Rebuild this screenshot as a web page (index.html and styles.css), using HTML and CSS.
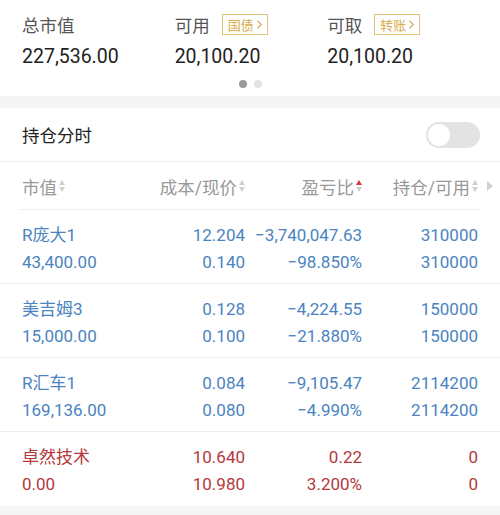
FILE: index.html
```html
<!DOCTYPE html>
<html lang="zh-CN">
<head>
  <meta charset="UTF-8" />
  <meta name="viewport" content="width=device-width, initial-scale=1.0"/>
  <title>持仓</title>
  <link rel="stylesheet" href="styles.css">
</head>
<body>

  <section class="summary">
    <div class="summary-grid">
      <div class="summary-item">
        <div class="label">总市值</div>
        <div class="value">227,536.00</div>
      </div>
      <div class="summary-item">
        <div class="label">可用 <span class="tag">国债<svg viewBox="0 0 8 12" width="7" height="11"><polyline points="1.5,1.5 6,6 1.5,10.5" /></svg></span></div>
        <div class="value">20,100.20</div>
      </div>
      <div class="summary-item">
        <div class="label">可取 <span class="tag">转账<svg viewBox="0 0 8 12" width="7" height="11"><polyline points="1.5,1.5 6,6 1.5,10.5" /></svg></span></div>
        <div class="value">20,100.20</div>
      </div>
    </div>
    <div class="dots">
      <span class="dot active"></span>
      <span class="dot"></span>
    </div>
  </section>

  <div class="gap"></div>

  <section class="positions">
    <div class="toggle-row">
      <span>持仓分时</span>
      <div class="switch"><div class="knob"></div></div>
    </div>

    <div class="table-head">
      <div class="th left">市值<span class="sort"><i class="up"></i><i class="down"></i></span></div>
      <div class="th">成本/现价<span class="sort"><i class="up"></i><i class="down"></i></span></div>
      <div class="th">盈亏比<span class="sort on"><i class="up"></i><i class="down"></i></span></div>
      <div class="th">持仓/可用<span class="sort"><i class="up"></i><i class="down"></i></span></div>
      <span class="more"></span>
    </div>

    <div class="row loss">
      <div class="cell left"><p>R庞大1</p><p>43,400.00</p></div>
      <div class="cell"><p>12.204</p><p>0.140</p></div>
      <div class="cell"><p>−3,740,047.63</p><p>−98.850%</p></div>
      <div class="cell"><p>310000</p><p>310000</p></div>
    </div>
    <div class="row loss">
      <div class="cell left"><p>美吉姆3</p><p>15,000.00</p></div>
      <div class="cell"><p>0.128</p><p>0.100</p></div>
      <div class="cell"><p>−4,224.55</p><p>−21.880%</p></div>
      <div class="cell"><p>150000</p><p>150000</p></div>
    </div>
    <div class="row loss">
      <div class="cell left"><p>R汇车1</p><p>169,136.00</p></div>
      <div class="cell"><p>0.084</p><p>0.080</p></div>
      <div class="cell"><p>−9,105.47</p><p>−4.990%</p></div>
      <div class="cell"><p>2114200</p><p>2114200</p></div>
    </div>
    <div class="row gain">
      <div class="cell left"><p>卓然技术</p><p>0.00</p></div>
      <div class="cell"><p>10.640</p><p>10.980</p></div>
      <div class="cell"><p>0.22</p><p>3.200%</p></div>
      <div class="cell"><p>0</p><p>0</p></div>
    </div>
  </section>

</body>
</html>
```

FILE: styles.css
```css
* { margin: 0; padding: 0; box-sizing: border-box; }
body {
  font-family: Roboto, "Noto Sans CJK SC", sans-serif;
  background-color: #f5f5f5;
  color: #222;
}

/* Summary */
.summary {
  background-color: #fff;
  padding: 11px 20px 8px 22px;
}
.summary-grid {
  display: grid;
  grid-template-columns: repeat(3, 1fr);
}
.label {
  display: flex;
  align-items: center;
  height: 26px;
  font-size: 17.5px;
  color: #555;
}
.tag {
  display: inline-flex;
  align-items: center;
  gap: 2px;
  margin-left: 12px;
  height: 21px;
  padding: 0 4px 0 5px;
  border: 1px solid #e2c27c;
  color: #d9ac4f;
  font-size: 13px;
}
.tag svg {
  fill: none;
  stroke: #d9ac4f;
  stroke-width: 1.4;
}
.value {
  margin-top: 5px;
  height: 30px;
  line-height: 30px;
  font-size: 19.5px;
  color: #222;
}
.dots {
  display: flex;
  justify-content: center;
  gap: 7px;
  margin-top: 8px;
  padding-right: 2px;
}
.dot {
  width: 8px;
  height: 8px;
  border-radius: 50%;
  background-color: #e2e2e2;
}
.dot.active { background-color: #9a9a9a; }

.gap { height: 12px; }

/* Positions */
.positions { background-color: #fff; }

.toggle-row {
  display: flex;
  justify-content: space-between;
  align-items: center;
  height: 54px;
  padding: 0 20px 0 22px;
  border-bottom: 1px solid #eee;
  font-size: 17.5px;
  color: #222;
}
.switch {
  width: 54px;
  height: 26px;
  border-radius: 13px;
  background-color: #e3e3e3;
  padding: 2px;
}
.knob {
  width: 22px;
  height: 22px;
  border-radius: 50%;
  background-color: #fff;
}

.table-head, .row {
  display: grid;
  grid-template-columns: 1fr 110px 117px 116px;
  padding: 0 22px;
}
.table-head {
  position: relative;
  height: 48px;
  align-items: center;
}
.table-head::after {
  content: "";
  position: absolute;
  left: 20px; right: 20px; bottom: 0;
  border-bottom: 1px solid #eee;
}
.th {
  display: flex;
  justify-content: flex-end;
  align-items: center;
  font-size: 17.5px;
  color: #999;
}
.th.left { justify-content: flex-start; }

.sort {
  display: inline-flex;
  flex-direction: column;
  gap: 2px;
  margin-left: 2px;
}
.sort i {
  width: 0;
  height: 0;
  border-left: 3.5px solid transparent;
  border-right: 3.5px solid transparent;
}
.sort .up { border-bottom: 5px solid #cfcfcf; }
.sort .down { border-top: 5px solid #cfcfcf; }
.sort.on .up { border-bottom-color: #d9363e; }

.more {
  position: absolute;
  right: 7px;
  top: 19px;
  width: 0;
  height: 0;
  border-top: 5px solid transparent;
  border-bottom: 5px solid transparent;
  border-left: 6px solid #cfcfcf;
}

.row {
  height: 74px;
  align-content: start;
  padding-top: 12px;
  border-bottom: 1px solid #eee;
  font-size: 17px;
}
.row:last-child { border-bottom: none; }
.cell { text-align: right; }
.cell.left { text-align: left; }
.cell p { height: 27px; line-height: 27px; }

.loss { color: #4a84c1; }
.gain { color: #b5383b; }
```
